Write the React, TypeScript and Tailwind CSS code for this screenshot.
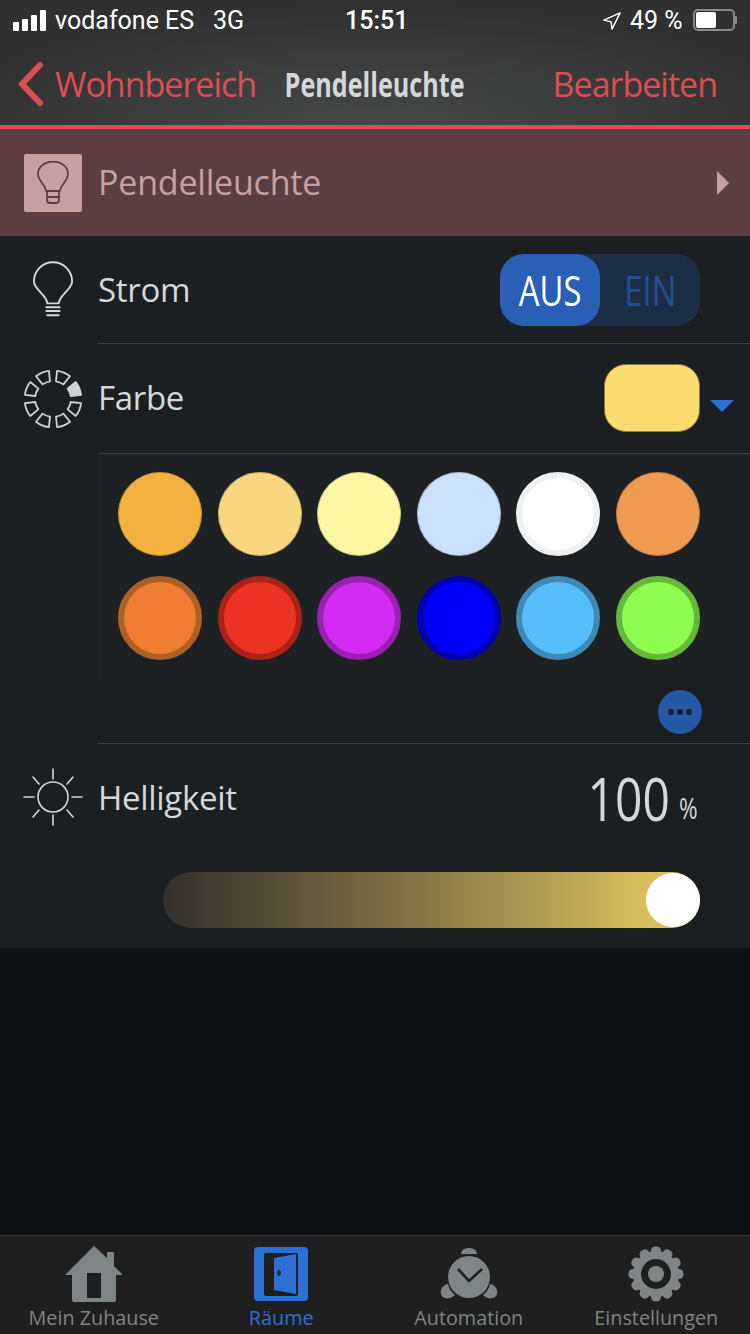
const topColors = ['#f3b13f', '#f8d77f', '#fdf6a3', '#cbe0fb', '#ffffff', '#f19a52'];
const bottomColors = [
  ['#ef7c30', '#ad5f28'],
  ['#ea3323', '#ab2317'],
  ['#d42bf2', '#9a1fb2'],
  ['#0000ff', '#0000b0'],
  ['#56bffb', '#3d8ab6'],
  ['#8ffc52', '#67b83a'],
];

const BulbIcon = () => (
  <svg viewBox="0 0 44 60" className="w-[42px] h-[58px]" fill="none" stroke="currentColor" strokeWidth="2" strokeLinecap="round" strokeLinejoin="round">
    <path d="M16 44c0-8-14-15-14-23a20 20 0 0 1 40 0c0 8-14 15-14 23z" />
    <path d="M15 48h14M15 52h14M16 56.500h12" />
  </svg>
);

const SmallBulbIcon = () => (
  <svg viewBox="0 0 32 44" className="w-[32px] h-[44px]" fill="none" stroke="currentColor" strokeWidth="1.8" strokeLinejoin="round">
    <path d="M9 30C9 24 1 20 1 13A15 12.500 0 0 1 31 13C31 20 23 24 23 30Z" />
    <path d="M10 30v9q0 3 3 3h6q3 0 3-3v-9M10 36h12" />
  </svg>
);

const ColorRing = () => (
  <svg viewBox="-30 -30 60 60" className="w-[60px] h-[60px]" fill="none" stroke="#cfd2d4" strokeWidth="1.8" strokeLinejoin="round">
    {[22.5, 67.5, 112.5, 157.5, 202.5, 247.5, 292.5, 337.5].map((angle) => (
      <path
        key={angle}
        d="M-7 -27.500Q0 -29.500 7 -27.500L4 -17.500Q0 -18.500 -4 -17.500Z"
        transform={`rotate(${angle})`}
        fill={angle === 67.5 ? '#cfd2d4' : 'none'}
      />
    ))}
  </svg>
);

const SunIcon = () => (
  <svg viewBox="0 0 60 60" className="w-[60px] h-[60px]" fill="none" stroke="#d5d8da" strokeWidth="1.6" strokeLinecap="round">
    <circle cx="30" cy="29" r="15" />
    <path d="M30 1v10M30 47v10M1 29h10M49 29h10M10 9l6 7M50 9l-6 7M10 49l6-7M50 49l-6-7" />
  </svg>
);

const HomeIcon = () => (
  <svg viewBox="0 0 56 56" className="w-[56px] h-[56px]">
    <path
      fillRule="evenodd"
      fill="#7f8484"
      d="M28 0 41 12V7q0-1 1-1h5q1 0 1 1v13l8 8v1h-6v25q0 2-2 2H8q-2 0-2-2V29H0v-1zM21 27v25h14V27z"
    />
  </svg>
);

const DoorIcon = () => (
  <svg viewBox="0 0 54 54" className="w-[54px] h-[54px]">
    <rect width="54" height="54" rx="4" fill="#2e6fd6" />
    <rect x="10" y="6" width="34" height="43" rx="2" fill="#1e1e1e" />
    <path d="M20 11 42 7v40l-22-4z" fill="#2e6fd6" />
    <ellipse cx="25" cy="26" rx="1.700" ry="3" fill="#1e1e1e" />
  </svg>
);

const AlarmIcon = () => (
  <svg viewBox="0 0 58 58" className="w-[58px] h-[58px]" fill="#7f8484">
    <path d="M21 9c0-8 16-8 16 0z" />
    <circle cx="29" cy="32" r="21" />
    <path d="M8 39c-8 1-10 12-3 14 3 1 7 0 10-3-4-3-6-7-7-11zM50 39c8 1 10 12 3 14-3 1-7 0-10-3 4-3 6-7 7-11z" />
    <path d="M18 24l11 12 13-12" fill="none" stroke="#1f1f1f" strokeWidth="2.600" />
  </svg>
);

const GearIcon = () => (
  <svg viewBox="-28 -28 56 56" className="w-[56px] h-[56px]">
    {[0, 30, 60, 90, 120, 150, 180, 210, 240, 270, 300, 330].map((angle) => (
      <rect key={angle} x="-5" y="-27.500" width="10" height="12" rx="4.500" fill="#7f8484" transform={`rotate(${angle})`} />
    ))}
    <circle r="19" fill="none" stroke="#7f8484" strokeWidth="8" />
    <circle r="8" fill="#7f8484" />
  </svg>
);

const Tab = ({ icon, label, active }: { icon: React.ReactNode; label: string; active?: boolean }) => (
  <div className="flex flex-col items-center">
    <div className="h-[58px] flex items-center">{icon}</div>
    <span className={`text-[19.8px] leading-[26px] mt-[2px] ${active ? 'text-[#2e6fd6]' : 'text-[#7f8484]'}`}>{label}</span>
  </div>
);

export default function App() {
  return (
    <div className="w-[750px] h-[1334px] flex flex-col bg-[#0f1112] overflow-hidden font-['Open_Sans',sans-serif]">
      <div className="h-[125px] bg-[radial-gradient(ellipse_60%_100%_at_50%_100%,#474948,#303030)]">
        <div className="h-[42px] flex items-center pl-[13px] text-white font-['Roboto',sans-serif] text-[25px]">
          <div className="flex items-end gap-[3px] h-[21px] mb-[2px]">
            <span className="w-[6px] h-[9px] bg-white rounded-[1px]" />
            <span className="w-[6px] h-[12px] bg-white rounded-[1px]" />
            <span className="w-[6px] h-[16px] bg-white rounded-[1px]" />
            <span className="w-[6px] h-[21px] bg-white rounded-[1px]" />
          </div>
          <span className="ml-[9px] w-[158px]">vodafone ES</span>
          <span className="w-[132px]">3G</span>
          <span className="font-medium w-[61px] whitespace-nowrap">15:51</span>
          <svg viewBox="0 0 20 20" className="w-[18px] h-[18px] ml-[197px]" fill="none" stroke="white" strokeWidth="1.600" strokeLinejoin="round">
            <path d="M19 1 1 9l8 2 1 8z" />
          </svg>
          <span className="ml-[9px] w-[63px] whitespace-nowrap">49 %</span>
          <div className="w-[42px] h-[22px] mb-[3px] border-2 border-[#8a8a8a] rounded-[5px] p-px">
            <div className="w-[20px] h-full bg-white rounded-[2px]" />
          </div>
          <div className="w-[2px] h-[8px] mb-[3px] bg-[#8a8a8a] rounded-r-[1px]" />
        </div>
        <div className="h-[83px] flex items-center pl-[18px] pr-[33px] pt-px">
          <svg viewBox="0 0 26 44" className="w-[26px] h-[44px]" fill="none" stroke="#dd4e52" strokeWidth="6" strokeLinecap="round" strokeLinejoin="round">
            <path d="M22 3 4 22l18 19" />
          </svg>
          <span className="ml-[11px] w-[201px] whitespace-nowrap text-[34px] text-[#dd4e52] tracking-[-1px]">Wohnbereich</span>
          <div className="ml-[30px] w-[178px] flex justify-center">
            <span className="shrink-0 whitespace-nowrap text-[34px] font-bold text-[#d5d8da] scale-x-[.74]">Pendelleuchte</span>
          </div>
          <span className="ml-auto whitespace-nowrap text-[34px] text-[#dd4e52] tracking-[-1px]">Bearbeiten</span>
        </div>
      </div>
      <div className="h-[111px] border-t-4 border-[#dd4e52] bg-[#5c3e42] flex items-center pl-[24px] pr-[21px]">
        <div className="w-[58px] h-[58px] rounded-[2px] bg-[#c9a0a2] flex items-center justify-center text-[#5c3e42]">
          <SmallBulbIcon />
        </div>
        <span className="ml-[16px] flex-1 text-[34px] text-[#c9a0a2] tracking-[-0.2px]">Pendelleuchte</span>
        <div className="w-0 h-0 border-y-[12px] border-y-transparent border-l-[12px] border-l-[#c9a0a2]" />
      </div>
      <div className="bg-[#1b1f22] text-[#d5d8da]">
        <div className="h-[107px] flex items-center pl-[24px] pr-[50px]">
          <div className="w-[58px] flex justify-center text-[#d5d8da]">
            <BulbIcon />
          </div>
          <span className="ml-[16px] flex-1 text-[33px] tracking-[-0.3px]">Strom</span>
          <div className="w-[200px] h-[72px] rounded-[24px] bg-[#1b2e45] flex">
            <div className="w-[100px] rounded-[24px] bg-[#2a5fb6] text-white flex items-center justify-center">
              <span className="shrink-0 text-[42px] scale-x-[.78]">AUS</span>
            </div>
            <div className="w-[100px] text-[#234f8f] flex items-center justify-center">
              <span className="shrink-0 text-[42px] scale-x-[.78]">EIN</span>
            </div>
          </div>
        </div>
        <div className="ml-[98px] h-px bg-[#3a3d40]" />
        <div className="h-[109px] flex items-center pl-[23px] pr-[16px]">
          <ColorRing />
          <span className="ml-[15px] mb-[2px] flex-1 text-[33px] tracking-[-0.3px]">Farbe</span>
          <div className="w-[96px] h-[68px] mb-[2px] rounded-[22px] bg-[#fbdc6e] border border-[#8c7d44]" />
          <div className="ml-[10px] mt-[14px] w-0 h-0 border-x-[12px] border-x-transparent border-t-[12px] border-t-[#2e6fd6]" />
        </div>
        <div className="ml-[98px] h-px bg-[#3a3d40]" />
        <div className="ml-[98px] h-[226px] bg-[#1e2124] pl-[20px] pt-[18px] flex flex-col gap-[20px]">
          <div className="flex gap-[15.6px]">
            {topColors.map((color) => (
              <div
                key={color}
                className={`w-[84px] h-[84px] rounded-full ${color === '#ffffff' ? 'border-[6px] border-[#f0f0f0]' : 'shadow-[inset_0_0_0_1px_rgba(0,0,0,0.2)]'}`}
                style={{ backgroundColor: color }}
              />
            ))}
          </div>
          <div className="flex gap-[15.6px]">
            {bottomColors.map(([color, ring]) => (
              <div key={color} className="w-[84px] h-[84px] rounded-full border-[6px]" style={{ backgroundColor: color, borderColor: ring }} />
            ))}
          </div>
        </div>
        <div className="h-[63px] flex items-center justify-end pr-[48px]">
          <div className="w-[44px] h-[44px] rounded-full bg-[#2559a8] flex items-center justify-center gap-[3px]">
            <span className="w-[6px] h-[6px] rounded-full bg-[#1b1f22]" />
            <span className="w-[6px] h-[6px] rounded-full bg-[#1b1f22]" />
            <span className="w-[6px] h-[6px] rounded-full bg-[#1b1f22]" />
          </div>
        </div>
        <div className="ml-[98px] h-px bg-[#3a3d40]" />
        <div className="h-[204px] pt-[24px]">
          <div className="flex items-center h-[60px] pl-[23px] pr-[52px]">
            <SunIcon />
            <span className="ml-[15px] flex-1 text-[33px] tracking-[-0.3px]">Helligkeit</span>
            <span className="text-[60px] font-normal scale-x-[.8] origin-right">100</span>
            <span className="ml-[9px] mt-[18px] text-[30px] w-[19px] whitespace-nowrap">
              <span className="inline-block scale-x-[.75] origin-left">%</span>
            </span>
          </div>
          <div className="mt-[44px] ml-[163px] w-[537px] h-[56px] rounded-full bg-[linear-gradient(90deg,#332f2c,#8a7a47_50%,#d8be5e_90%)] flex items-center justify-end">
            <div className="w-[54px] h-[54px] rounded-full bg-white" />
          </div>
        </div>
      </div>
      <div className="flex-1" />
      <div className="h-[99px] border-t border-[#333537] bg-[#1f1f1f] grid grid-cols-4 pt-[9px]">
        <Tab icon={<HomeIcon />} label="Mein Zuhause" />
        <Tab icon={<DoorIcon />} label="Räume" active />
        <Tab icon={<AlarmIcon />} label="Automation" />
        <Tab icon={<GearIcon />} label="Einstellungen" />
      </div>
    </div>
  );
}
